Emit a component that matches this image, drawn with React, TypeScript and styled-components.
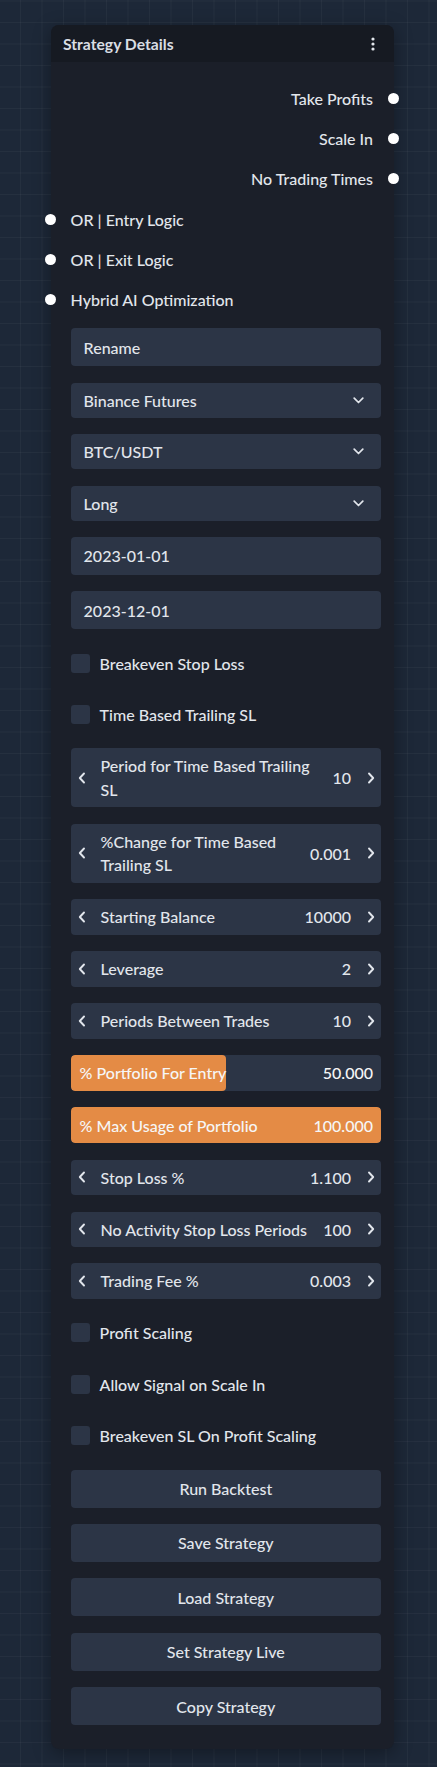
import React from "react";
import styled, { createGlobalStyle } from "styled-components";

const GlobalStyle = createGlobalStyle`
  html, body {
    margin: 0;
    padding: 0;
  }
  body {
    background-color: #1d2838;
    background-image:
      linear-gradient(to right, rgba(255,255,255,0.035) 1px, transparent 1px),
      linear-gradient(to bottom, rgba(255,255,255,0.035) 1px, transparent 1px);
    background-size: 21.5px 21.5px;
    background-position: 20px 0.5px;
    font-family: Lato, "Open Sans", sans-serif;
    color: #e2e6ec;
  }
`;

const Page = styled.div`
  box-sizing: border-box;
  min-height: 1767px;
  padding: 25px 0 20px 51px;
`;

const Card = styled.div`
  position: relative;
  width: 343px;
  background: #1b1f29;
  border-radius: 8px;
  box-shadow: 0 4px 18px rgba(0, 0, 0, 0.35);
`;

const Header = styled.div`
  display: flex;
  align-items: center;
  justify-content: space-between;
  height: 37px;
  padding: 0 19px 0 12px;
  background: #161a22;
  border-radius: 8px 8px 0 0;
`;

const Title = styled.div`
  font-size: 15.7px;
  font-weight: 700;
  color: #d9dde3;
`;

const Body = styled.div`
  display: flex;
  flex-direction: column;
  gap: 16.4px;
  padding: 24px 13px 24px 19.6px;
`;

const textStyle = `
  font-size: 16px;
  font-weight: 500;
  color: #e2e6ec;
`;

const HandleRow = styled.div<{ $side: "left" | "right" }>`
  position: relative;
  display: flex;
  align-items: center;
  height: 24px;
  justify-content: ${(p) => (p.$side === "right" ? "flex-end" : "flex-start")};
  padding-right: ${(p) => (p.$side === "right" ? "8px" : "0")};
  ${textStyle}
`;

const Dot = styled.span<{ $side: "left" | "right" }>`
  position: absolute;
  top: 50%;
  width: 11px;
  height: 11px;
  margin-top: -5.5px;
  border-radius: 50%;
  background: #ffffff;
  ${(p) => (p.$side === "right" ? "right: -18px;" : "left: -25.5px;")}
`;

const Field = styled.div<{ $h?: number }>`
  box-sizing: border-box;
  display: flex;
  align-items: center;
  height: ${(p) => p.$h ?? 38}px;
  padding: 0 13px;
  background: #2c3546;
  border-radius: 4px;
  ${textStyle}
`;

const SelectField = styled(Field)`
  justify-content: space-between;
  padding-right: 17px;
`;

const CheckRow = styled.label`
  display: flex;
  align-items: center;
  gap: 10px;
  height: 35px;
  ${textStyle}
`;

const CheckBox = styled.span`
  width: 19px;
  height: 19px;
  border-radius: 3px;
  background: #2c3546;
`;

const Stepper = styled.div`
  box-sizing: border-box;
  display: flex;
  align-items: center;
  min-height: 35px;
  padding: 6px 5px 6px 6px;
  background: #2c3546;
  border-radius: 4px;
  ${textStyle}
`;

const Arrow = styled.span`
  display: flex;
  align-items: center;
  justify-content: center;
  width: 10px;
  flex: none;
`;

const StepLabel = styled.span`
  flex: 1;
  margin-left: 14px;
  line-height: 23.5px;
`;

const StepValue = styled.span`
  margin: 0 15px 0 12px;
  line-height: 23.5px;
`;

const Slider = styled.div`
  position: relative;
  box-sizing: border-box;
  height: 36px;
  background: #2c3546;
  border-radius: 4px;
  overflow: hidden;
`;

const SliderFill = styled.div`
  position: absolute;
  left: 0;
  top: 0;
  bottom: 0;
  background: #e48b45;
  border-radius: 4px;
`;

const SliderContent = styled.div`
  position: relative;
  box-sizing: border-box;
  display: flex;
  align-items: center;
  justify-content: space-between;
  height: 100%;
  padding: 0 8px 0 9px;
  ${textStyle}
  color: #f6f6f6;
`;

const ActionButton = styled.button`
  height: 38px;
  border: none;
  border-radius: 4px;
  background: #2c3546;
  font-family: inherit;
  ${textStyle}
  cursor: pointer;
`;

const ChevronLeft = () => (
  <svg width="8" height="12" viewBox="0 0 8 12" fill="none">
    <path d="M6 1.5L1.8 6L6 10.5" stroke="#e2e6ec" strokeWidth="1.9" strokeLinecap="round" strokeLinejoin="round" />
  </svg>
);

const ChevronRight = () => (
  <svg width="8" height="12" viewBox="0 0 8 12" fill="none">
    <path d="M2 1.5L6.2 6L2 10.5" stroke="#e2e6ec" strokeWidth="1.9" strokeLinecap="round" strokeLinejoin="round" />
  </svg>
);

const ChevronDown = () => (
  <svg width="11" height="7" viewBox="0 0 11 7" fill="none">
    <path d="M1.2 1.2L5.5 5.5L9.8 1.2" stroke="#e2e6ec" strokeWidth="1.7" strokeLinecap="round" strokeLinejoin="round" />
  </svg>
);

const Kebab = () => (
  <svg width="4" height="14" viewBox="0 0 4 14">
    <circle cx="2" cy="2" r="1.6" fill="#e2e6ec" />
    <circle cx="2" cy="7" r="1.6" fill="#e2e6ec" />
    <circle cx="2" cy="12" r="1.6" fill="#e2e6ec" />
  </svg>
);

type Item =
  | { kind: "handle"; side: "left" | "right"; label: string }
  | { kind: "input"; label: string }
  | { kind: "select"; label: string }
  | { kind: "check"; label: string }
  | { kind: "stepper"; label: string; value: string }
  | { kind: "slider"; label: string; value: string; pct: number }
  | { kind: "button"; label: string };

const items: Item[] = [
  { kind: "handle", side: "right", label: "Take Profits" },
  { kind: "handle", side: "right", label: "Scale In" },
  { kind: "handle", side: "right", label: "No Trading Times" },
  { kind: "handle", side: "left", label: "OR | Entry Logic" },
  { kind: "handle", side: "left", label: "OR | Exit Logic" },
  { kind: "handle", side: "left", label: "Hybrid AI Optimization" },
  { kind: "input", label: "Rename" },
  { kind: "select", label: "Binance Futures" },
  { kind: "select", label: "BTC/USDT" },
  { kind: "select", label: "Long" },
  { kind: "input", label: "2023-01-01" },
  { kind: "input", label: "2023-12-01" },
  { kind: "check", label: "Breakeven Stop Loss" },
  { kind: "check", label: "Time Based Trailing SL" },
  { kind: "stepper", label: "Period for Time Based Trailing SL", value: "10" },
  { kind: "stepper", label: "%Change for Time Based Trailing SL", value: "0.001" },
  { kind: "stepper", label: "Starting Balance", value: "10000" },
  { kind: "stepper", label: "Leverage", value: "2" },
  { kind: "stepper", label: "Periods Between Trades", value: "10" },
  { kind: "slider", label: "% Portfolio For Entry", value: "50.000", pct: 50 },
  { kind: "slider", label: "% Max Usage of Portfolio", value: "100.000", pct: 100 },
  { kind: "stepper", label: "Stop Loss %", value: "1.100" },
  { kind: "stepper", label: "No Activity Stop Loss Periods", value: "100" },
  { kind: "stepper", label: "Trading Fee %", value: "0.003" },
  { kind: "check", label: "Profit Scaling" },
  { kind: "check", label: "Allow Signal on Scale In" },
  { kind: "check", label: "Breakeven SL On Profit Scaling" },
  { kind: "button", label: "Run Backtest" },
  { kind: "button", label: "Save Strategy" },
  { kind: "button", label: "Load Strategy" },
  { kind: "button", label: "Set Strategy Live" },
  { kind: "button", label: "Copy Strategy" },
];

const renderItem = (it: Item, i: number) => {
  switch (it.kind) {
    case "handle":
      return (
        <HandleRow key={i} $side={it.side}>
          {it.label}
          <Dot $side={it.side} />
        </HandleRow>
      );
    case "input":
      return <Field key={i}>{it.label}</Field>;
    case "select":
      return (
        <SelectField key={i} $h={35}>
          {it.label}
          <ChevronDown />
        </SelectField>
      );
    case "check":
      return (
        <CheckRow key={i}>
          <CheckBox />
          {it.label}
        </CheckRow>
      );
    case "stepper":
      return (
        <Stepper key={i}>
          <Arrow>
            <ChevronLeft />
          </Arrow>
          <StepLabel>{it.label}</StepLabel>
          <StepValue>{it.value}</StepValue>
          <Arrow>
            <ChevronRight />
          </Arrow>
        </Stepper>
      );
    case "slider":
      return (
        <Slider key={i}>
          <SliderFill style={{ width: `${it.pct}%` }} />
          <SliderContent>
            <span>{it.label}</span>
            <span>{it.value}</span>
          </SliderContent>
        </Slider>
      );
    case "button":
      return <ActionButton key={i}>{it.label}</ActionButton>;
  }
};

export default function App() {
  return (
    <>
      <GlobalStyle />
      <Page>
        <Card>
          <Header>
            <Title>Strategy Details</Title>
            <Kebab />
          </Header>
          <Body>{items.map(renderItem)}</Body>
        </Card>
      </Page>
    </>
  );
}
